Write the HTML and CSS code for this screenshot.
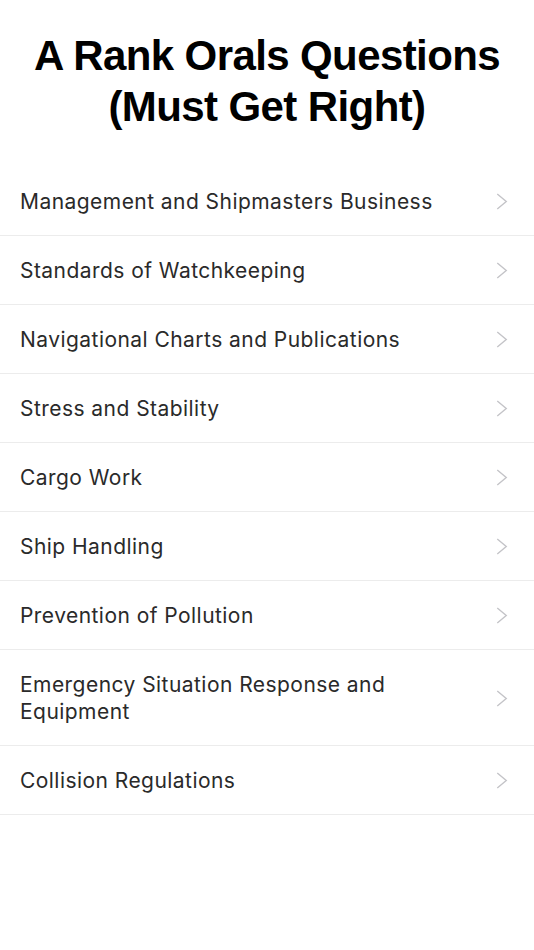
FILE: index.html
```html
<!DOCTYPE html>
<html lang="en">
<head>
    <meta charset="UTF-8">
    <meta name="viewport" content="width=device-width, initial-scale=1.0">
    <link rel="stylesheet" href="styles.css">
    <title>A Rank Orals Questions</title>
</head>
<body>
    <!-- Title -->
    <header class="page-header">
        <h1>A Rank Orals Questions<br>(Must Get Right)</h1>
    </header>

    <!-- Topic list -->
    <ul class="topic-list">
        <li class="topic">
            <span class="topic-name">Management and Shipmasters Business</span>
            <svg class="chevron" viewBox="0 0 12 18"><polyline points="1,1 10.5,9 1,17"/></svg>
        </li>
        <li class="topic">
            <span class="topic-name">Standards of Watchkeeping</span>
            <svg class="chevron" viewBox="0 0 12 18"><polyline points="1,1 10.5,9 1,17"/></svg>
        </li>
        <li class="topic">
            <span class="topic-name">Navigational Charts and Publications</span>
            <svg class="chevron" viewBox="0 0 12 18"><polyline points="1,1 10.5,9 1,17"/></svg>
        </li>
        <li class="topic">
            <span class="topic-name">Stress and Stability</span>
            <svg class="chevron" viewBox="0 0 12 18"><polyline points="1,1 10.5,9 1,17"/></svg>
        </li>
        <li class="topic">
            <span class="topic-name">Cargo Work</span>
            <svg class="chevron" viewBox="0 0 12 18"><polyline points="1,1 10.5,9 1,17"/></svg>
        </li>
        <li class="topic">
            <span class="topic-name">Ship Handling</span>
            <svg class="chevron" viewBox="0 0 12 18"><polyline points="1,1 10.5,9 1,17"/></svg>
        </li>
        <li class="topic">
            <span class="topic-name">Prevention of Pollution</span>
            <svg class="chevron" viewBox="0 0 12 18"><polyline points="1,1 10.5,9 1,17"/></svg>
        </li>
        <li class="topic">
            <span class="topic-name">Emergency Situation Response and Equipment</span>
            <svg class="chevron" viewBox="0 0 12 18"><polyline points="1,1 10.5,9 1,17"/></svg>
        </li>
        <li class="topic">
            <span class="topic-name">Collision Regulations</span>
            <svg class="chevron" viewBox="0 0 12 18"><polyline points="1,1 10.5,9 1,17"/></svg>
        </li>
    </ul>
</body>
</html>
```

FILE: styles.css
```css
/* =======================
   General
======================= */
body {
    font-family: "Liberation Sans", Arial, sans-serif;
    background-color: #fff;
    margin: 0;
    padding: 0;
    color: #000;
}

/* =======================
   Header
======================= */
.page-header {
    padding: 30px 0 35px;
    text-align: center;
}

.page-header h1 {
    margin: 0;
    font-size: 42px;
    line-height: 51px;
    font-weight: bold;
    letter-spacing: -0.6px;
}

/* =======================
   List
======================= */
.topic-list {
    list-style: none;
    margin: 0;
    padding: 0;
}

.topic {
    display: flex;
    align-items: center;
    justify-content: space-between;
    padding: 21px 26px 20px 20px;
    border-bottom: 1px solid #ececec;
}

.topic-name {
    max-width: 440px;
    font-family: Inter, "Liberation Sans", sans-serif;
    font-size: 21px;
    line-height: 27px;
    letter-spacing: 0.45px;
    color: #2a2a2a;
}

.chevron {
    width: 12px;
    height: 17px;
    flex-shrink: 0;
    fill: none;
    stroke: #c4c4c8;
    stroke-width: 1.5;
}
```
